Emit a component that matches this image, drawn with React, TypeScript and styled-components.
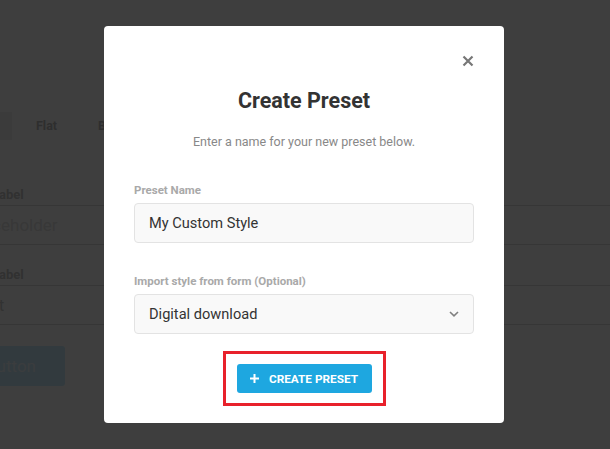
import React from 'react'
import styled, { createGlobalStyle } from 'styled-components'

const GlobalStyle = createGlobalStyle`
  html, body {
    margin: 0;
    padding: 0;
    background: #ffffff;
    font-family: Roboto, "Liberation Sans", Arial, sans-serif;
    overflow: hidden;
  }
`

const Page = styled.div`
  width: 100%;
  height: 449px;
  overflow: hidden;
  background: #ffffff;
`

const PageInner = styled.div`
  margin-left: -28px;
  padding-top: 112px;
`

const Tabs = styled.div`
  display: flex;
  align-items: center;
  height: 28px;
`

const ActiveTab = styled.div`
  width: 40px;
  height: 28px;
  background: #f2f2f2;
`

interface ITabProps {
  offset: number
}

const Tab = styled.div<ITabProps>`
  margin-left: ${({ offset }) => offset}px;
  font-size: 12.5px;
  font-weight: 700;
  line-height: 28px;
  color: #bdbdbd;
  white-space: nowrap;
`

const Field = styled.div`
  margin-top: 47px;

  & + & {
    margin-top: 22px;
  }
`

const PageLabel = styled.div`
  margin-left: 20px;
  font-size: 13px;
  font-weight: 700;
  line-height: 16px;
  color: #c8c8c8;
`

const PageInput = styled.div`
  margin-top: 2px;
  height: 38px;
  border-top: 1px solid #dcdcdc;
  border-bottom: 1px solid #dcdcdc;
  font-size: 17px;
  line-height: 38px;
  color: #e4e4e4;
  text-indent: -4px;
`

const PageText = styled(PageInput)`
  color: #cfcfcf;
  text-indent: 0;
`

const PageButton = styled.div`
  margin-top: 21px;
  width: 93px;
  height: 40px;
  box-sizing: border-box;
  padding-left: 14px;
  border-radius: 3px;
  background: #cdeeff;
  color: #f0f8fc;
  font-size: 17px;
  line-height: 40px;
`

const Overlay = styled.div`
  position: fixed;
  inset: 0;
  padding-right: 2px;
  background: rgba(0, 0, 0, 0.757);
  display: flex;
  align-items: center;
  justify-content: center;
`

const Modal = styled.div`
  width: 400px;
  box-sizing: border-box;
  padding: 26px 30px 17px;
  background: #ffffff;
  border-radius: 4px;
  display: flex;
  flex-direction: column;
`

const CloseRow = styled.div`
  display: flex;
  justify-content: flex-end;
  height: 18px;
  align-items: center;
`

const CloseButton = styled.button`
  border: none;
  background: none;
  padding: 0;
  width: 12px;
  height: 12px;
  display: flex;
  cursor: pointer;
`

const Title = styled.h2`
  margin: 18px 0 0;
  font-size: 21.5px;
  font-weight: 700;
  line-height: 25px;
  color: #333333;
  text-align: center;
`

const Subtitle = styled.p`
  margin: 20px 0 0;
  font-size: 12.5px;
  line-height: 18px;
  color: #888888;
  text-align: center;
`

interface IFormGroupProps {
  first?: boolean
}

const FormGroup = styled.div<IFormGroupProps>`
  margin-top: ${({ first }) => (first ? '31px' : '30px')};
  display: flex;
  flex-direction: column;
`

const Label = styled.label`
  font-size: 11.5px;
  font-weight: 700;
  line-height: 16px;
  color: #a9a9a9;
  margin-bottom: 5px;
`

const Input = styled.div`
  height: 40px;
  box-sizing: border-box;
  border: 1px solid #e3e3e3;
  border-radius: 4px;
  background: #f9f9f9;
  padding: 0 14px;
  display: flex;
  align-items: center;
  justify-content: space-between;
  font-size: 14.6px;
  color: #333333;
`

const Footer = styled.div`
  margin-top: 17px;
  display: flex;
  justify-content: center;
`

const Highlight = styled.div`
  border: 3px solid #e8212b;
  padding: 10px 11px;
`

const PrimaryButton = styled.button`
  width: 135px;
  height: 29px;
  border: none;
  border-radius: 3px;
  background: #1ea7e0;
  color: #ffffff;
  font-family: Roboto, "Liberation Sans", Arial, sans-serif;
  font-size: 11.8px;
  font-weight: 700;
  display: flex;
  align-items: center;
  justify-content: center;
  gap: 10px;
  cursor: pointer;
`

const CloseIcon = () => (
  <svg width="12" height="12" viewBox="0 0 12 12">
    <path d="M1.5 1.5 L10.5 10.5 M10.5 1.5 L1.5 10.5" stroke="#777" strokeWidth="2.2" />
  </svg>
)

const Chevron = () => (
  <svg width="10" height="6" viewBox="0 0 10 6">
    <path d="M1 1 L5 4.8 L9 1" fill="none" stroke="#808080" strokeWidth="1.6" />
  </svg>
)

const Plus = () => (
  <svg width="9" height="9" viewBox="0 0 9 9">
    <path d="M4.5 0 V9 M0 4.5 H9" stroke="#fff" strokeWidth="2" />
  </svg>
)

const App: React.FC = () => (
  <>
    <GlobalStyle />
    <Page>
      <PageInner>
        <Tabs>
          <ActiveTab />
          <Tab offset={24}>Flat</Tab>
          <Tab offset={41}>Bordered</Tab>
        </Tabs>
        <Field>
          <PageLabel>Label</PageLabel>
          <PageInput>Placeholder</PageInput>
        </Field>
        <Field>
          <PageLabel>Label</PageLabel>
          <PageText>Text</PageText>
        </Field>
        <PageButton>Button</PageButton>
      </PageInner>
    </Page>
    <Overlay>
      <Modal>
        <CloseRow>
          <CloseButton aria-label="Close">
            <CloseIcon />
          </CloseButton>
        </CloseRow>
        <Title>Create Preset</Title>
        <Subtitle>Enter a name for your new preset below.</Subtitle>
        <FormGroup first>
          <Label>Preset Name</Label>
          <Input>My Custom Style</Input>
        </FormGroup>
        <FormGroup>
          <Label>Import style from form (Optional)</Label>
          <Input>
            Digital download
            <Chevron />
          </Input>
        </FormGroup>
        <Footer>
          <Highlight>
            <PrimaryButton>
              <Plus />
              CREATE PRESET
            </PrimaryButton>
          </Highlight>
        </Footer>
      </Modal>
    </Overlay>
  </>
)

export default App
